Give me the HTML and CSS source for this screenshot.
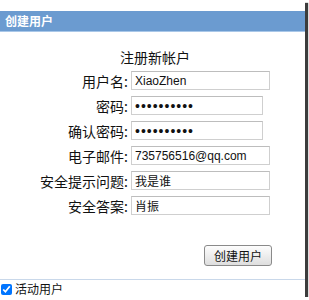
FILE: index.html
```html
<!DOCTYPE html>
<html lang="zh-CN">
<head>
<meta charset="UTF-8">
<meta name="viewport" content="width=device-width, initial-scale=1.0">
<title>创建用户</title>
<link rel="stylesheet" href="styles.css">
</head>
<body>
    <div class="window">
        <header class="step-title">创建用户</header>
        <form class="register">
            <h2 class="form-title">注册新帐户</h2>
            <div class="row">
                <label for="user">用户名:</label>
                <input id="user" class="field" type="text" value="XiaoZhen">
            </div>
            <div class="row">
                <label for="pwd">密码:</label>
                <input id="pwd" class="field short" type="password" value="1234567890">
            </div>
            <div class="row">
                <label for="pwd2">确认密码:</label>
                <input id="pwd2" class="field short" type="password" value="1234567890">
            </div>
            <div class="row">
                <label for="mail">电子邮件:</label>
                <input id="mail" class="field" type="text" value="735756516@qq.com">
            </div>
            <div class="row">
                <label for="question">安全提示问题:</label>
                <input id="question" class="field" type="text" value="我是谁">
            </div>
            <div class="row">
                <label for="answer">安全答案:</label>
                <input id="answer" class="field" type="text" value="肖振">
            </div>
            <div class="actions">
                <button type="button">创建用户</button>
            </div>
        </form>
        <div class="active-user">
            <input type="checkbox" id="active" checked>
            <label for="active">活动用户</label>
        </div>
    </div>
</body>
</html>
```
FILE: styles.css
```css
body, html {
    margin: 0;
    padding: 0;
    background-color: #ffffff;
}
body {
    font-family: "Noto Sans CJK SC", "DejaVu Sans", sans-serif;
    color: #111;
}
.window {
    width: 305px;
    height: 297px;
    padding-top: 11px;
    box-sizing: border-box;
    background: #ffffff;
    overflow: hidden;
    display: flex;
    flex-direction: column;
    box-shadow: 3px 3px 1px 0 #3c3c3c;
}
.step-title {
    height: 20px;
    line-height: 20px;
    padding-left: 5px;
    background-color: #6b9bd0;
    border-bottom: 1px solid #a9c7e8;
    color: #ffffff;
    font-size: 12px;
    font-weight: bold;
}
.register {
    display: flex;
    flex-direction: column;
    margin: 0;
    padding-top: 14px;
}
.form-title {
    margin: 0;
    height: 22px;
    line-height: 22px;
    padding-left: 120px;
    font-size: 14px;
    font-weight: normal;
}
.row {
    display: flex;
    align-items: center;
    height: 25px;
}
.row label {
    width: 128px;
    text-align: right;
    font-size: 14px;
}
.field {
    margin: 0 0 0 3px;
    width: 139px;
    height: 19px;
    box-sizing: border-box;
    padding: 0 3px;
    border: 1px solid #cfcfcf;
    border-top-color: #bdbdbd;
    font-family: "Liberation Sans", "Noto Sans CJK SC", sans-serif;
    font-size: 12px;
    color: #111;
    background: #fff;
}
.field.short {
    width: 132px;
    font-size: 14px;
    letter-spacing: 1px;
}
.actions {
    display: flex;
    justify-content: flex-end;
    padding: 27px 33px 0 0;
}
.actions button {
    width: 68px;
    height: 21px;
    padding: 0;
    border: 1px solid #8a8a8a;
    border-radius: 3px;
    background: linear-gradient(#fdfdfd, #dedede);
    font-family: "Noto Sans CJK SC", sans-serif;
    font-size: 12px;
    color: #111;
}
.active-user {
    margin-top: 13px;
    border-top: 1px solid #c9d8ea;
    display: flex;
    align-items: center;
    height: 17px;
    padding-top: 1px;
    font-size: 12px;
    line-height: 14px;
}
.active-user input {
    margin: 0 3px 0 1px;
    width: 11px;
    height: 11px;
}
```
